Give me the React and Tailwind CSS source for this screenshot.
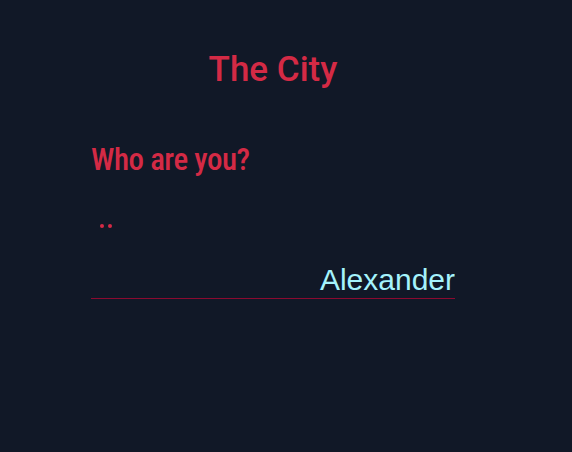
export default function App() {
  return (
    <div className="min-h-[452px] w-full bg-[#111827] pt-[47px]" style={{ fontFamily: "Roboto, sans-serif" }}>
      <div className="ml-[91px] flex w-[364px] flex-col">
        <h1 className="text-center text-[35px] font-medium leading-[46px] text-[#d42a45]">The City</h1>
        <h2 className="mt-[47px] text-[31px] font-medium leading-[40px] tracking-[-0.5px] text-[#d42a45] font-stretch-condensed">
          Who are you?
        </h2>
        <div className="mt-[44px] flex gap-[4px] pl-[9px]">
          <span className="h-[4px] w-[4px] rounded-full bg-[#d42a45]" />
          <span className="h-[4px] w-[4px] rounded-full bg-[#d42a45]" />
        </div>
        <input
          defaultValue="Alexander"
          className="mt-[33px] h-[37px] w-full bg-transparent p-0 text-right text-[30px] leading-[37px] text-[#a5f3fc] outline-none"
          style={{ fontFamily: "'Liberation Sans', Arial, sans-serif" }}
        />
        <div className="h-px w-full bg-[#8b0a30]" />
      </div>
    </div>
  );
}
